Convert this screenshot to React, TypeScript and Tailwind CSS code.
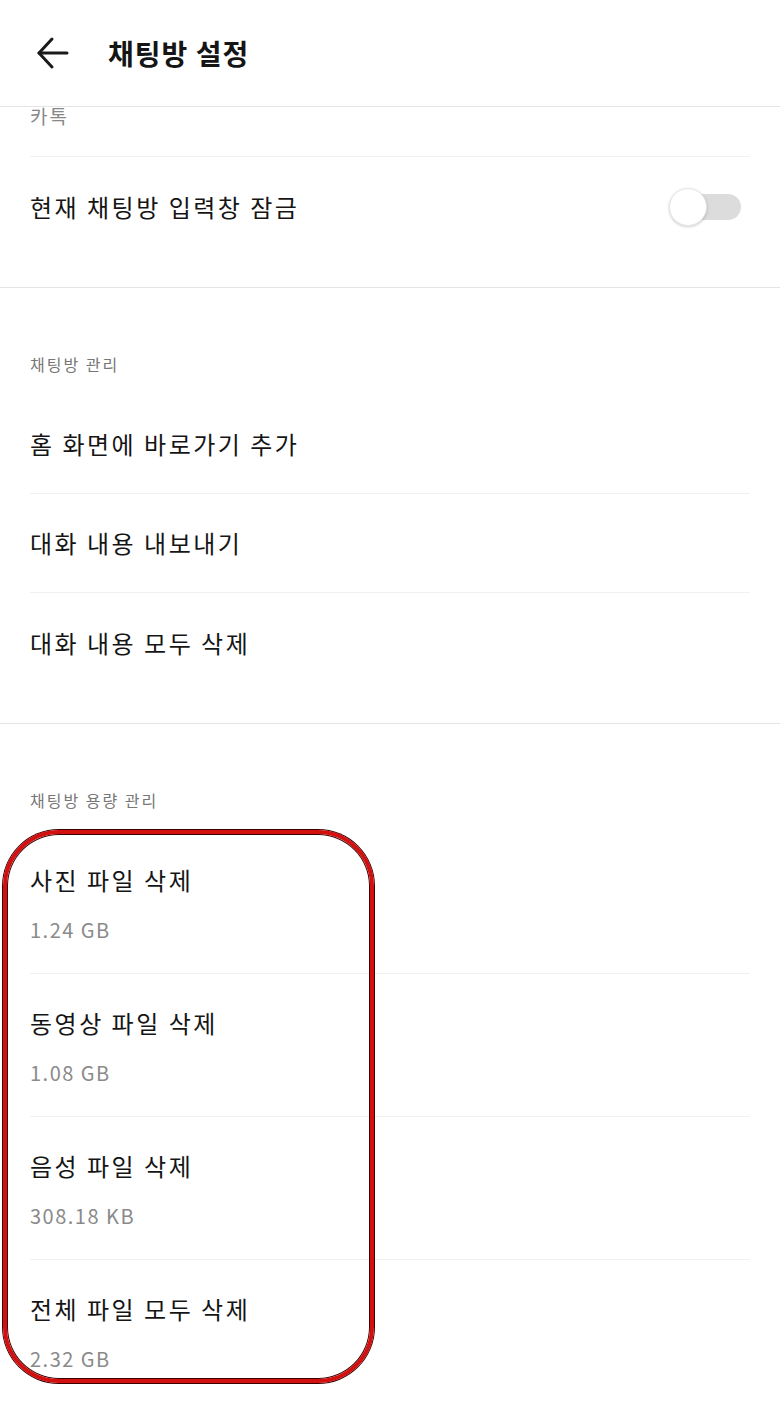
import React from 'react';

const font = { fontFamily: '"Noto Sans CJK KR", "Noto Sans", sans-serif' };

function BackIcon() {
  return (
    <svg width="34" height="34" viewBox="0 0 34 34" fill="none" stroke="#1a1a1a" strokeWidth="3" strokeLinecap="round" strokeLinejoin="round">
      <path d="M31 17H3" />
      <path d="M16 3L3 17l13 14" />
    </svg>
  );
}

function Toggle() {
  return (
    <div className="relative mr-[9px] flex h-[38px] w-[72px] items-center">
      <div className="ml-[2px] h-[26px] w-[70px] rounded-full bg-[#dcdcdc]" />
      <div className="absolute left-0 top-0 h-[38px] w-[38px] rounded-full border border-[#e6e6e6] bg-white shadow-[0_1px_3px_rgba(0,0,0,0.2)]" />
    </div>
  );
}

function SectionLabel({ children }: { children: React.ReactNode }) {
  return (
    <div className="flex h-[107px] items-start px-[30px] pt-[64px] text-[16px] leading-[24px] tracking-[2px] text-[#777]">
      {children}
    </div>
  );
}

function Row({ title, last }: { title: string; last?: boolean }) {
  return (
    <div className={`mx-[30px] flex h-[99px] items-center text-[24px] tracking-[2.5px] text-[#151515] ${last ? '' : 'border-b border-[#f0f0f0]'}`}>
      {title}
    </div>
  );
}

function SizeRow({ title, size, last }: { title: string; size: string; last?: boolean }) {
  return (
    <div className={`mx-[30px] flex h-[143px] flex-col ${last ? '' : 'border-b border-[#f0f0f0]'}`}>
      <div className="mt-[33px] text-[24px] leading-[32px] tracking-[2.5px] text-[#151515]">{title}</div>
      <div className="mt-[20px] text-[20px] leading-[28px] tracking-[1.5px] text-[#8a8a8a]">{size}</div>
    </div>
  );
}

export default function App() {
  return (
    <div className="relative h-[1414px] w-[780px] overflow-hidden bg-white" style={font}>
      <header className="flex h-[107px] items-center border-b border-[#e4e4e4] bg-white">
        <div className="ml-[36px] flex h-[34px] w-[34px] items-center justify-center">
          <BackIcon />
        </div>
        <h1 className="ml-[38px] text-[28px] font-bold tracking-[1px] text-[#151515]">채팅방 설정</h1>
      </header>

      <div className="h-[50px] overflow-hidden">
        <div className="mx-[30px] -mt-[5px] h-[55px] border-b border-[#f0f0f0] text-[19px] leading-[28px] tracking-[2px] text-[#888]">카톡</div>
      </div>

      <div className="border-b border-[#e4e4e4] pb-[30px]">
        <div className="mx-[30px] flex h-[100px] items-center justify-between text-[24px] tracking-[2.5px] text-[#151515]">
          <span>현재 채팅방 입력창 잠금</span>
          <Toggle />
        </div>
      </div>

      <div className="border-b border-[#e4e4e4] pb-[31px]">
        <SectionLabel>채팅방 관리</SectionLabel>
        <Row title="홈 화면에 바로가기 추가" />
        <Row title="대화 내용 내보내기" />
        <Row title="대화 내용 모두 삭제" last />
      </div>

      <div className="relative">
        <SectionLabel>채팅방 용량 관리</SectionLabel>
        <SizeRow title="사진 파일 삭제" size="1.24 GB" />
        <SizeRow title="동영상 파일 삭제" size="1.08 GB" />
        <SizeRow title="음성 파일 삭제" size="308.18 KB" />
        <SizeRow title="전체 파일 모두 삭제" size="2.32 GB" last />

        <div className="pointer-events-none absolute left-[3px] top-[106px] h-[553px] w-[371px] rounded-[56px] border-[4px] border-[#d40f0f] shadow-[0_0_0_1px_#3a0000,inset_0_0_0_1px_#3a0000]" />
      </div>
    </div>
  );
}
